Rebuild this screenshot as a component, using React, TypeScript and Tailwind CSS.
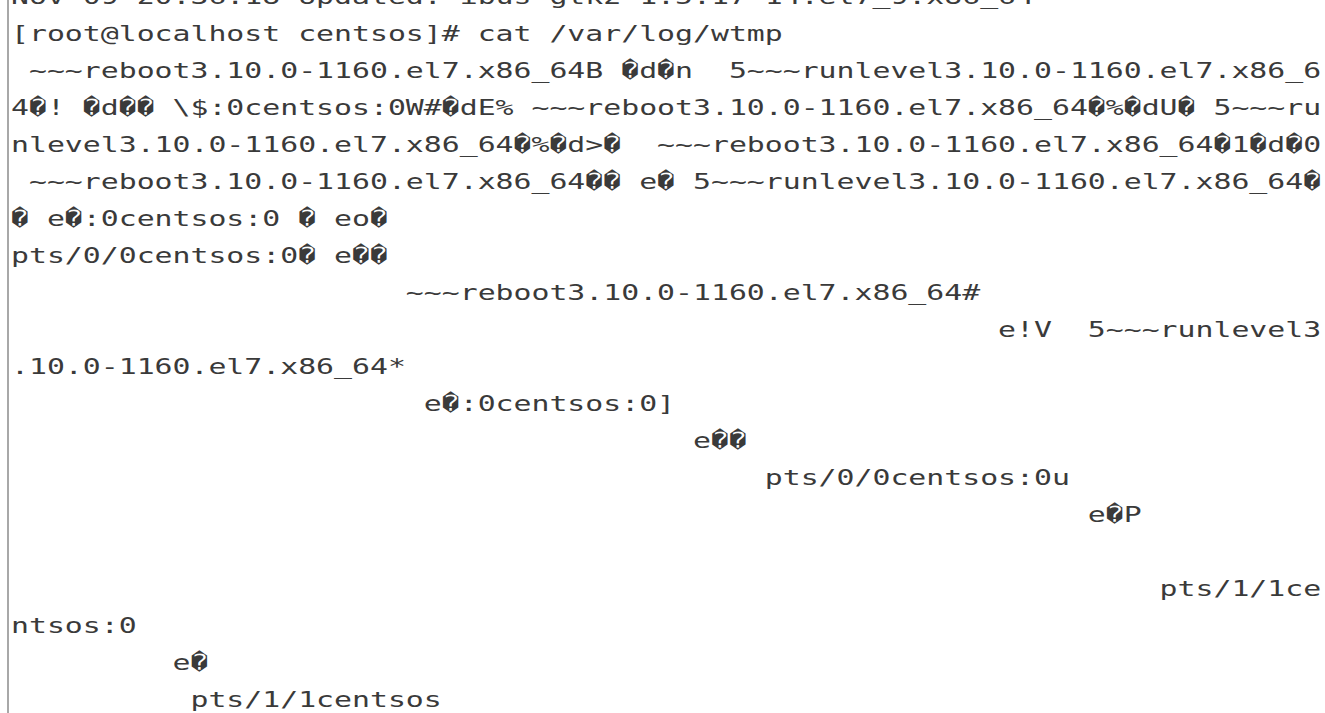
import * as React from "react";

const R = "\uFFFD";

// one entry per terminal row (73 columns wide)
const rows: string[] = [
  "Nov 09 20:36:18 Updated: ibus-gtk2-1.5.17-14.el7_9.x86_64",
  "[root@localhost centsos]# cat /var/log/wtmp",
  ` ~~~reboot3.10.0-1160.el7.x86_64B ${R}d${R}n  5~~~runlevel3.10.0-1160.el7.x86_6`,
  `4${R}! ${R}d${R}${R} \\$:0centsos:0W#${R}dE% ~~~reboot3.10.0-1160.el7.x86_64${R}%${R}dU${R} 5~~~ru`,
  `nlevel3.10.0-1160.el7.x86_64${R}%${R}d>${R}  ~~~reboot3.10.0-1160.el7.x86_64${R}1${R}d${R}0`,
  ` ~~~reboot3.10.0-1160.el7.x86_64${R}${R} e${R} 5~~~runlevel3.10.0-1160.el7.x86_64${R}`,
  `${R} e${R}:0centsos:0 ${R} eo${R}`,
  `pts/0/0centsos:0${R} e${R}${R}`,
  " ".repeat(22) + "~~~reboot3.10.0-1160.el7.x86_64#",
  " ".repeat(55) + "e!V  5~~~runlevel3",
  ".10.0-1160.el7.x86_64*",
  " ".repeat(23) + `e${R}:0centsos:0]`,
  " ".repeat(38) + `e${R}${R}`,
  " ".repeat(42) + "pts/0/0centsos:0u",
  " ".repeat(60) + `e${R}P`,
  "",
  " ".repeat(64) + "pts/1/1ce",
  "ntsos:0",
  " ".repeat(9) + `e${R}`,
  " ".repeat(10) + "pts/1/1centsos",
];

export default function App() {
  return (
    <div className="h-screen w-full overflow-hidden bg-white pl-[7px]">
      <div className="h-full overflow-hidden border-l-2 border-[#a8a8a8] pl-[2px]">
        <div className="-mt-[22px] origin-top-left scale-x-[1.355] font-['DejaVu_Sans_Mono',monospace] text-[22px] text-[#3a3a3a]">
          {rows.map((line, i) => (
            <div key={i} className="h-[37px] whitespace-pre leading-[37px]">
              {line}
            </div>
          ))}
        </div>
      </div>
    </div>
  );
}
